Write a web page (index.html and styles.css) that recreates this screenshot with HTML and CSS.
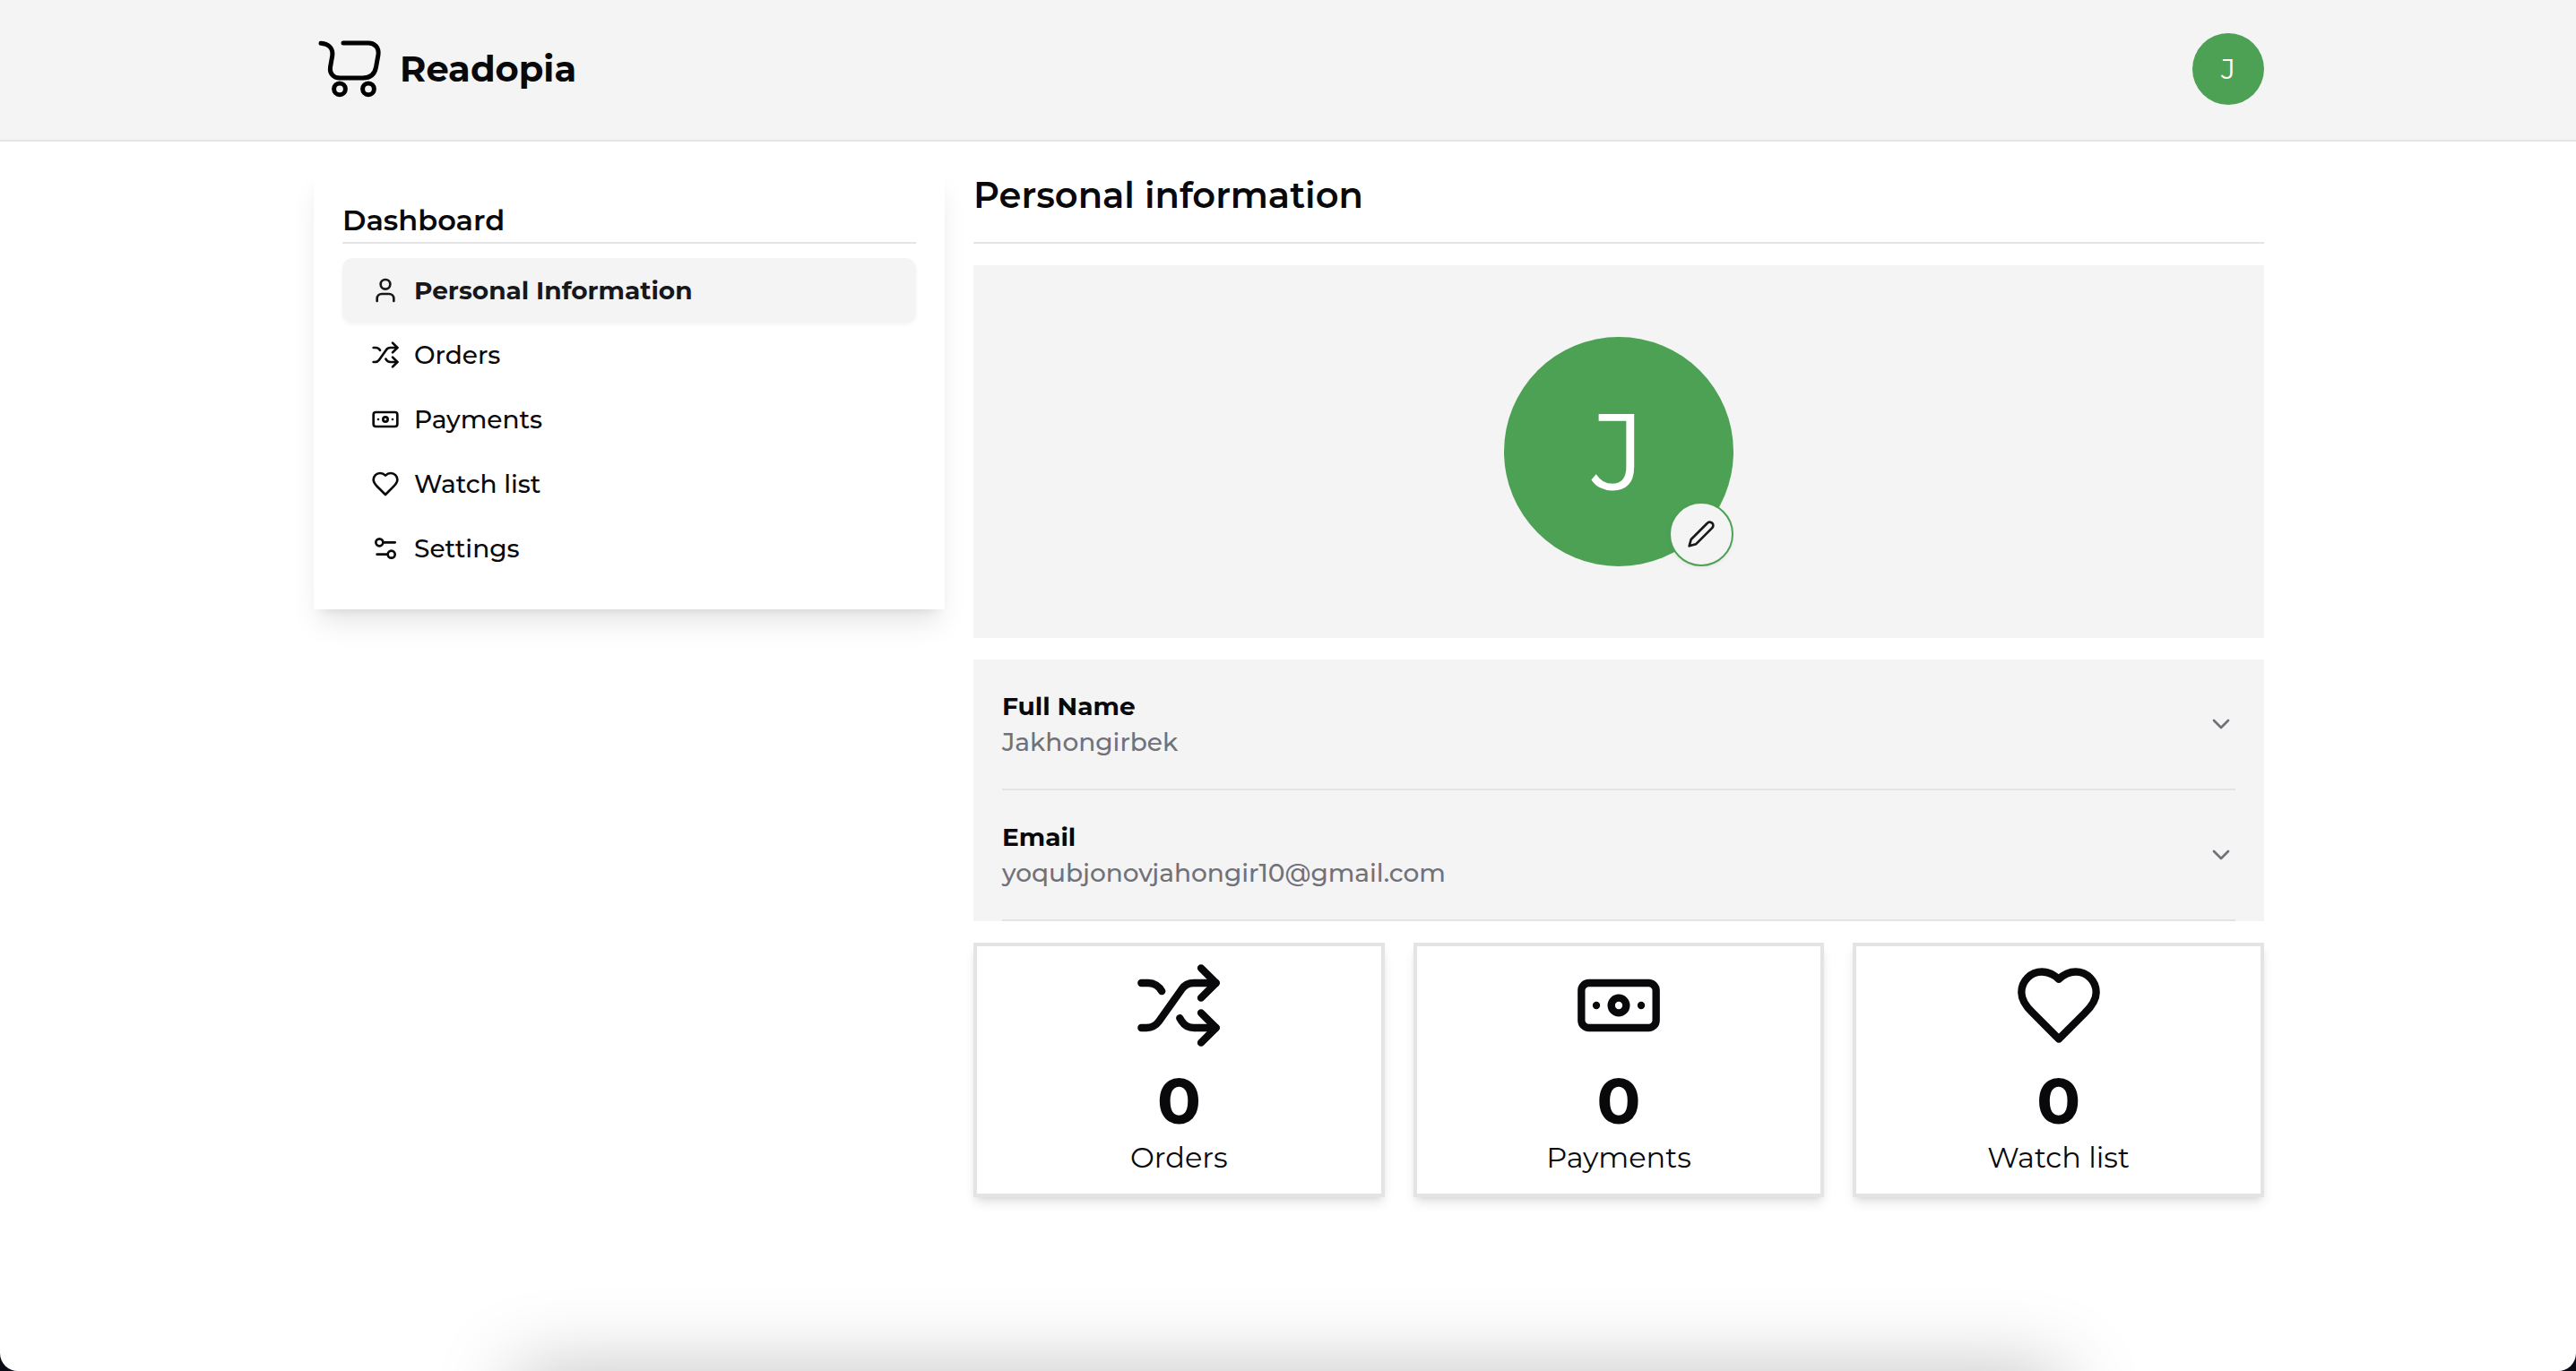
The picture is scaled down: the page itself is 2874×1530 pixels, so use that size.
FILE: index.html
```html
<!DOCTYPE html>
<html lang="en">
<head>
<meta charset="utf-8">
<title>Readopia</title>
<meta name="viewport" content="width=device-width, initial-scale=1">
<link rel="stylesheet" href="styles.css">
</head>
<body>
<svg class="sprite" aria-hidden="true">
  <symbol id="user" viewBox="0 0 24 24"><path d="M19 21v-2a4 4 0 0 0-4-4H9a4 4 0 0 0-4 4v2"/><circle cx="12" cy="7" r="4"/></symbol>
  <symbol id="shuffle" viewBox="0 0 24 24"><path d="M2 18h1.4c1.3 0 2.5-.6 3.3-1.7l6.1-8.6c.7-1.1 2-1.7 3.3-1.7H22"/><path d="m18 2 4 4-4 4"/><path d="M2 6h1.9c1.5 0 2.9.9 3.6 2.2"/><path d="M22 18h-5.9c-1.3 0-2.6-.7-3.3-1.8l-.5-.8"/><path d="m18 14 4 4-4 4"/></symbol>
  <symbol id="banknote" viewBox="0 0 24 24"><rect width="20" height="12" x="2" y="6" rx="2"/><circle cx="12" cy="12" r="2"/><path d="M6 12h.01M18 12h.01"/></symbol>
  <symbol id="heart" viewBox="0 0 24 24"><path d="M19 14c1.49-1.46 3-3.21 3-5.5A5.5 5.5 0 0 0 16.5 3c-1.76 0-3 .5-4.5 2-1.5-1.5-2.74-2-4.5-2A5.5 5.5 0 0 0 2 8.5c0 2.3 1.5 4.05 3 5.5l7 7Z"/></symbol>
  <symbol id="settings" viewBox="0 0 24 24"><path d="M20 7h-9"/><path d="M14 17H5"/><circle cx="17" cy="17" r="3"/><circle cx="7" cy="7" r="3"/></symbol>
  <symbol id="pencil" viewBox="0 0 24 24"><path d="M17 3a2.85 2.83 0 1 1 4 4L7.5 20.5 2 22l1.5-5.5Z"/></symbol>
  <symbol id="chevron" viewBox="0 0 24 24"><path d="m6 9 6 6 6-6"/></symbol>
</svg>

<header class="header">
  <div class="container header-row">
    <a class="brand" href="#">
      <svg class="brand-icon" viewBox="0 0 80 80" aria-hidden="true">
        <path d="M8 11.300C17 12 21.700 17 20.800 25L18.500 38C17.500 45 22 50 29 50H55C63 50 68 46 69.500 38L72 24C73 16 68 11 61 11H33"/>
        <circle cx="29" cy="62.300" r="6.400"/><circle cx="61" cy="62.300" r="6.400"/>
      </svg>
      <span>Readopia</span>
    </a>
    <button class="avatar avatar-small" type="button" aria-label="Account">J</button>
  </div>
</header>

<main class="container layout">
  <aside class="sidebar">
    <h2 class="sidebar-title">Dashboard</h2>
    <nav class="menu">
      <a class="menu-item active" href="#"><svg class="icon"><use href="#user"/></svg><span>Personal Information</span></a>
      <a class="menu-item" href="#"><svg class="icon"><use href="#shuffle"/></svg><span>Orders</span></a>
      <a class="menu-item" href="#"><svg class="icon"><use href="#banknote"/></svg><span>Payments</span></a>
      <a class="menu-item" href="#"><svg class="icon"><use href="#heart"/></svg><span>Watch list</span></a>
      <a class="menu-item" href="#"><svg class="icon"><use href="#settings"/></svg><span>Settings</span></a>
    </nav>
  </aside>

  <section class="content">
    <h1 class="title">Personal information</h1>
    <div class="photo">
      <div class="photo-frame">
        <div class="avatar avatar-large">J</div>
        <button class="edit" type="button" aria-label="Edit photo"><svg class="icon"><use href="#pencil"/></svg></button>
      </div>
    </div>
    <div class="details">
      <button class="detail" type="button">
        <span class="detail-text"><span class="detail-label">Full Name</span><span class="detail-value">Jakhongirbek</span></span>
        <svg class="icon"><use href="#chevron"/></svg>
      </button>
      <button class="detail" type="button">
        <span class="detail-text"><span class="detail-label">Email</span><span class="detail-value">yoqubjonovjahongir10@gmail.com</span></span>
        <svg class="icon"><use href="#chevron"/></svg>
      </button>
    </div>
    <div class="stats">
      <div class="stat"><svg class="icon stat-icon"><use href="#shuffle"/></svg><strong class="stat-count">0</strong><span class="stat-name">Orders</span></div>
      <div class="stat"><svg class="icon stat-icon"><use href="#banknote"/></svg><strong class="stat-count">0</strong><span class="stat-name">Payments</span></div>
      <div class="stat"><svg class="icon stat-icon"><use href="#heart"/></svg><strong class="stat-count">0</strong><span class="stat-name">Watch list</span></div>
    </div>
  </section>
</main>
<div class="bottom-shade" aria-hidden="true"></div>
</body>
</html>
```
FILE: styles.css
```css
* {
  box-sizing: border-box;
}

html {
  background: #0b0b18;
}

body {
  min-height: 100vh;
  margin: 0;
  overflow-x: hidden;
  border-radius: 0 0 20px 20px;
  background: #fff;
  color: #09090b;
  font-family: Montserrat, Inter, "Open Sans", sans-serif;
  font-size: 28px;
  font-weight: 500;
  line-height: 40px;
}

button {
  padding: 0;
  border: 0;
  background: none;
  color: inherit;
  font: inherit;
  cursor: pointer;
}

a {
  color: inherit;
  text-decoration: none;
}

.sprite {
  display: none;
}

.icon {
  flex: none;
  width: 32px;
  height: 32px;
  fill: none;
  stroke: currentColor;
  stroke-width: 2;
  stroke-linecap: round;
  stroke-linejoin: round;
}

.container {
  max-width: 2304px;
  margin: 0 auto;
  padding: 0 63px 0 65px;
}

/* Header */
.header {
  padding-bottom: 2px;
  border-bottom: 2px solid #e4e4e5;
  background: #f4f4f4;
}

.header-row {
  display: flex;
  align-items: center;
  justify-content: space-between;
  height: 154px;
}

.brand {
  display: flex;
  align-items: center;
  gap: 16px;
  font-size: 40px;
  font-weight: 700;
  line-height: 56px;
}

.brand-icon {
  width: 80px;
  height: 80px;
  fill: none;
  stroke: #000;
  stroke-width: 5;
  stroke-linecap: round;
}

.avatar {
  display: flex;
  align-items: center;
  justify-content: center;
  border-radius: 50%;
  background: #4da154;
  color: #fff;
  font-weight: 400;
}

.avatar-small {
  width: 80px;
  height: 80px;
  font-size: 32px;
}

.avatar-large {
  width: 256px;
  height: 256px;
  font-size: 120px;
}

/* Page */
.layout {
  display: grid;
  grid-template-columns: minmax(0, 1fr) minmax(0, 1fr) minmax(0, 1fr);
  align-items: start;
  gap: 32px;
  padding-top: 32px;
  padding-bottom: 32px;
}

.sidebar {
  padding: 32px;
  background: #fff;
  box-shadow: 0 20px 30px -6px rgba(0, 0, 0, .1), 0 8px 12px -8px rgba(0, 0, 0, .1);
}

.sidebar-title {
  margin: 0 0 16px;
  border-bottom: 2px solid #e4e4e5;
  font-size: 32px;
  font-weight: 600;
  line-height: 48px;
}

.menu-item {
  display: flex;
  align-items: center;
  gap: 16px;
  height: 72px;
  padding: 0 32px;
  border-radius: 12px;
}

.menu-item.active {
  background: #f4f4f4;
  box-shadow: 0 2px 4px rgba(0, 0, 0, .05);
  color: #18181b;
  font-weight: 700;
}

.content {
  display: grid;
  grid-column: span 2;
  gap: 24px;
}

.title {
  margin: 0;
  padding-bottom: 24px;
  border-bottom: 2px solid #e4e4e5;
  font-size: 40px;
  font-weight: 600;
  line-height: 56px;
}

.photo {
  display: flex;
  justify-content: center;
  padding: 80px;
  background: #f4f4f4;
}

.photo-frame {
  position: relative;
}

.edit {
  position: absolute;
  right: 0;
  bottom: 0;
  display: flex;
  align-items: center;
  justify-content: center;
  width: 72px;
  height: 72px;
  border: 2px solid #4da154;
  border-radius: 50%;
  background: #f4f4f4;
  box-shadow: 0 2px 4px rgba(0, 0, 0, .05);
  color: #18181b;
}

.details {
  padding: 0 32px;
  background: #f4f4f4;
}

.detail {
  display: flex;
  align-items: center;
  justify-content: space-between;
  width: 100%;
  padding: 32px 0;
  border-bottom: 2px solid #e4e4e5;
  text-align: left;
  color: #71717a;
}

.detail-text {
  display: grid;
}

.detail-label {
  color: #09090b;
  font-weight: 700;
}

.stats {
  display: grid;
  grid-template-columns: repeat(3, 1fr);
  gap: 32px;
}

.stat {
  display: flex;
  flex-direction: column;
  align-items: center;
  padding: 16px;
  border: 4px solid #e4e4e6;
  background: #fff;
  box-shadow: 0 8px 12px -2px rgba(0, 0, 0, .1), 0 4px 8px -4px rgba(0, 0, 0, .1);
}

.stat-icon {
  width: 100px;
  height: 100px;
}

.stat-count {
  margin-top: 16px;
  font-size: 72px;
  font-weight: 700;
  line-height: 80px;
}

.stat-name {
  font-size: 32px;
  font-weight: 400;
  line-height: 48px;
}

/* Soft shade rising from the lower edge */
.bottom-shade {
  position: fixed;
  top: 100%;
  right: 20%;
  left: 20%;
  height: 80px;
  box-shadow: 0 0 88px rgba(0, 0, 0, .25);
  pointer-events: none;
}
```
